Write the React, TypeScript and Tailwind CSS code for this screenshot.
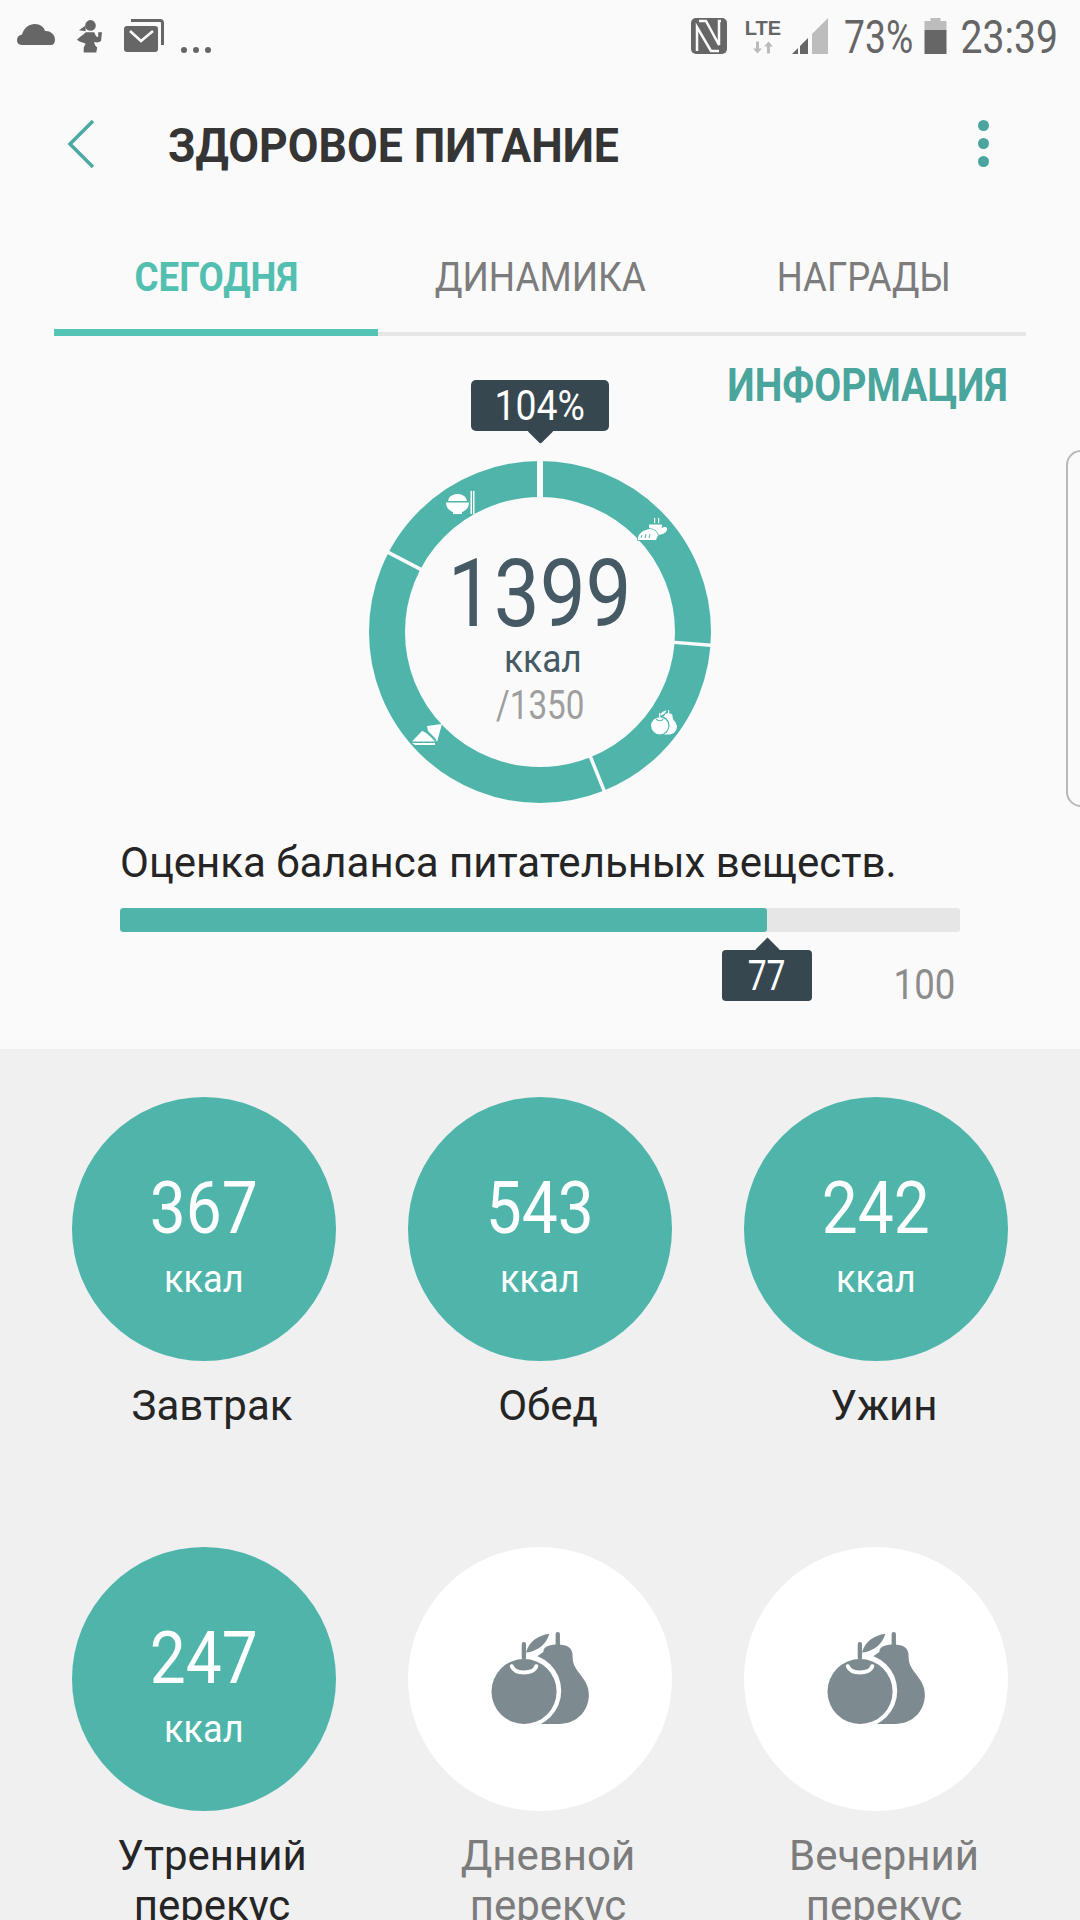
const TEAL = "#4fb5aa";

function polar(r: number, deg: number) {
  const a = ((deg - 90) * Math.PI) / 180;
  return [171 + r * Math.cos(a), 171 + r * Math.sin(a)];
}

function FruitShape({ color, gap }: { color: string; gap: string }) {
  return (
    <g>
      <rect x="194" y="0" width="13" height="44" rx="6" fill={color} />
      <path
        d="M157 60C157 45 175 38 200 38C230 38 245 50 245 70C245 100 255 110 270 130C285 150 294 165 294 190C294 240 255 277 205 277L100 277L100 100Z"
        fill={color}
      />
      <circle cx="99" cy="177" r="112" fill={gap} />
      <circle cx="99" cy="179" r="98" fill={color} />
      <rect x="92" y="30" width="13" height="54" rx="6" fill={color} />
      <path d="M105 62C112 30 140 10 175 5C168 35 140 58 105 62Z" fill={color} />
      <path d="M62 103C72 128 128 128 136 103" fill="none" stroke={gap} strokeWidth="12" strokeLinecap="round" />
    </g>
  );
}

function Meal({ value, label, muted }: { value?: string; label: string[]; muted?: boolean }) {
  return (
    <div className="flex w-[264px] flex-col items-center">
      <div
        className={`flex h-[264px] w-[264px] flex-col items-center rounded-full ${
          value ? "bg-[#4fb5aa] pt-[76px]" : "bg-white pt-[85px]"
        }`}
      >
        {value ? (
          <>
            <div className="scale-x-[0.89] text-[72px] leading-[72px] text-white">{value}</div>
            <div className="mt-[14px] scale-x-[0.95] text-[38px] leading-[40px] text-white">ккал</div>
          </>
        ) : (
          <svg viewBox="0 0 294 277" className="h-[92px] w-[98px]">
            <FruitShape color="#7d8a90" gap="#ffffff" />
          </svg>
        )}
      </div>
      <div
        className={`mt-[20px] pl-[16px] text-center text-[42px] leading-[50px] ${
          muted ? "text-[#7c7c7c]" : "text-[#252525]"
        }`}
      >
        {label.map((l) => (
          <div key={l}>{l}</div>
        ))}
      </div>
    </div>
  );
}

export default function App() {
  return (
    <div className="relative h-[1920px] w-[1080px] overflow-hidden bg-[#f0f0f0] [font-family:Roboto,sans-serif]">
      <div className="h-[1049px] bg-[#fafafa]">
        {/* status bar */}
        <div className="flex h-[72px] items-start justify-between pl-[17px] pr-[23px] text-[#666]">
          <div className="flex items-start">
            <svg viewBox="0 0 38 21" className="mt-[24px] h-[21px] w-[38px]" fill="#666">
              <path d="M5 21C1 21 0 18 0 16c0-3 2-5 5-5.500C7 4 12 0 18 0c5 0 9 3 10 7 5-.5 10 3 10 9 0 3-2 5-4 5Z" />
            </svg>
            <svg viewBox="0 0 28 34" className="ml-[21px] mt-[19px] h-[34px] w-[27px]" fill="#666">
              <circle cx="15" cy="6" r="5.500" />
              <path d="M10 6L3 11L10 12Z" />
              <path d="M10 13L19 13C20 16 21 18 23 18L23 13L27 13L26 22C24 24 21 24 19 23C19 26 20 27 22 29L21 34H8L8 29L10 25C7 24 3 23 1 21C3 18 8 16 10 13Z" />
            </svg>
            <svg viewBox="0 0 40 33" className="ml-[21px] mt-[19px] h-[33px] w-[40px]" fill="none">
              <path d="M7 1.500h29a2.500 2.500 0 0 1 2.500 2.500V26" stroke="#666" strokeWidth="3" />
              <rect x="0" y="7" width="34" height="26" rx="3" fill="#666" />
              <path d="M6 12l11 10 12-10" stroke="#fafafa" strokeWidth="2.500" />
            </svg>
            <div className="ml-[17px] mt-[47px] flex gap-[6px]">
              <span className="h-[6px] w-[6px] rounded-full bg-[#666]" />
              <span className="h-[6px] w-[6px] rounded-full bg-[#666]" />
              <span className="h-[6px] w-[6px] rounded-full bg-[#666]" />
            </div>
          </div>
          <div className="flex items-start">
            <svg viewBox="0 0 36 36" className="mt-[18px] h-[36px] w-[36px]">
              <rect width="36" height="36" rx="5" fill="#666" />
              <path d="M8 3h7l13 24V3h2M6 33V9l14 24h8" fill="none" stroke="#fafafa" strokeWidth="2.500" />
            </svg>
            <div className="ml-[17px] mt-[19px] flex w-[38px] flex-col items-center">
              <span className="text-[20px] font-bold leading-[19px] [font-family:'Liberation_Sans',sans-serif]">LTE</span>
              <svg viewBox="0 0 22 12" className="mt-[3px] h-[13px] w-[22px]" fill="#bbb">
                <path d="M4 0h3v7h3l-4.500 5L1 7h3zM15 12h3V5h3l-4.500-5L12 5h3z" />
              </svg>
            </div>
            <svg viewBox="0 0 36 36" className="ml-[10px] mt-[18px] h-[36px] w-[36px]">
              <path d="M20 36V16L36 0v36Z" fill="#bdbdbd" />
              <path d="M0 36l6-6v6ZM8 36v-8l8-8v16Z" fill="#666" />
            </svg>
            <div className="ml-[16px] mt-[14px] flex w-[69px] justify-center">
              <span className="scale-x-[0.81] text-[46px] leading-[46px]">73%</span>
            </div>
            <svg viewBox="0 0 22 36" className="ml-[11px] mt-[18px] h-[36px] w-[23px]">
              <path d="M6 0h10v3h6v9H0V3h6Z" fill="#bdbdbd" />
              <path d="M0 12h22v24H0Z" fill="#666" />
            </svg>
            <div className="ml-[15px] mt-[14px] flex w-[95px] justify-center">
              <span className="scale-x-[0.85] text-[46px] leading-[46px]">23:39</span>
            </div>
          </div>
        </div>

        {/* title */}
        <div className="relative flex h-[147px] items-center pl-[168px]">
          <svg viewBox="0 0 28 50" className="absolute left-[67px] top-[47px] h-[50px] w-[28px]" fill="none">
            <path d="M26 2L3 25l23 23" stroke="#4aaaa2" strokeWidth="3.500" />
          </svg>
          <span className="origin-left scale-x-[0.91] whitespace-nowrap text-[49px] font-bold leading-[56px] text-[#353535]">
            ЗДОРОВОЕ ПИТАНИЕ
          </span>
          <div className="absolute left-[978px] top-[48px] flex flex-col gap-[7px]">
            <span className="h-[11px] w-[11px] rounded-full bg-[#4aa5a0]" />
            <span className="h-[11px] w-[11px] rounded-full bg-[#4aa5a0]" />
            <span className="h-[11px] w-[11px] rounded-full bg-[#4aa5a0]" />
          </div>
        </div>

        {/* tabs */}
        <div className="ml-[54px] w-[972px]">
          <div className="flex h-[110px] items-center pt-[6px] text-[41px] leading-[48px]">
            <div className="flex w-[324px] justify-center font-bold text-[#53bfb1]">
              <span className="scale-x-[0.895]">СЕГОДНЯ</span>
            </div>
            <div className="flex w-[324px] justify-center text-[#7c7c7c]">
              <span className="scale-x-[0.9]">ДИНАМИКА</span>
            </div>
            <div className="flex w-[324px] justify-center text-[#7c7c7c]">
              <span className="scale-x-[0.89]">НАГРАДЫ</span>
            </div>
          </div>
          <div className="relative h-[7px]">
            <div className="absolute bottom-0 left-0 h-[4px] w-full bg-[#e6e6e6]" />
            <div className="absolute left-0 top-0 h-[7px] w-[324px] bg-[#53c4b6]" />
          </div>
        </div>

        {/* info */}
        <div className="mt-[24px] flex h-[50px] justify-end pr-[72px]">
          <span className="origin-right scale-x-[0.833] text-[47px] font-bold leading-[50px] text-[#4aa59c]">ИНФОРМАЦИЯ</span>
        </div>

        {/* ring */}
        <div className="mx-auto mt-[-30px] flex w-[342px] flex-col items-center">
          <div className="relative z-10 flex h-[51px] w-[138px] items-center justify-center rounded-[5px] bg-[#37474f] text-white">
            <span className="scale-x-[0.89] text-[42px] leading-[48px]">104%</span>
            <span className="absolute bottom-[-9px] left-[60px] h-[19px] w-[19px] rotate-45 rounded-[2px] bg-[#37474f]" />
          </div>
          <div className="relative mt-[30px] h-[342px] w-[342px]">
            <svg viewBox="0 0 342 342" className="absolute inset-0 h-full w-full">
              <circle cx="171" cy="171" r="153" fill="none" stroke={TEAL} strokeWidth="36" />
              {[0, 94.4, 158, 297.7].map((d) => {
                const [x1, y1] = polar(132, d);
                const [x2, y2] = polar(173, d);
                return <line key={d} x1={x1} y1={y1} x2={x2} y2={y2} stroke="#fafafa" strokeWidth={d === 0 ? 6 : 3.5} />;
              })}
              <g fill="#fff">
                {/* bowl and sticks */}
                <path d="M77 41.500H100C100 47 96 50 93 51V53H84V51C81 50 77 47 77 41.500Z" />
                <path d="M79 40C80 35 84 33 88.500 33C93 33 97 35 98 40Z" />
                <rect x="101.500" y="30" width="1.500" height="23" />
                <rect x="104" y="30" width="1.500" height="23" />
                {/* cup */}
                <path d="M280 63.500H293C293 65 293 66 292.500 67C296 65 299 66 298 69C297 72 294 73 290 74C288 77 286 77 284 77C282 74 281 69 280 66Z" />
                <rect x="285" y="57" width="1.200" height="5" />
                <rect x="289" y="57" width="1.200" height="5" />
                {/* bread */}
                <path d="M269 79C268 73 274 69 281 68C285 68 288 71 289 74L287 79Z" stroke={TEAL} strokeWidth="1.500" paintOrder="stroke" />
                <path d="M273 74l-1 3M277 73l-1 4M281 73l-1 4" stroke={TEAL} strokeWidth="1" />
                {/* sandwich */}
                <path d="M43 280.500L53 270C57 271 62 276 66 280.500Z" />
                <path d="M43 282H66V284H46Z" />
                <path d="M58 265L73 263L68 281L66 277L59 270Z" />
              </g>
              <g transform="translate(282 249) scale(0.088)">
                <FruitShape color="#ffffff" gap={TEAL} />
              </g>
            </svg>
            <div className="absolute inset-0 flex flex-col items-center">
              <div className="mt-[88px] scale-x-[0.87] text-[94px] leading-[90px] text-[#455a64]">1399</div>
              <div className="pl-[6px] text-[38px] leading-[40px] text-[#455a64]">
                <div className="scale-x-[0.93]">ккал</div>
              </div>
              <div className="mt-[7px] scale-x-[0.83] text-[40px] leading-[40px] text-[#9e9e9e]">/1350</div>
            </div>
          </div>
        </div>

        {/* balance */}
        <div className="ml-[120px] mt-[35px] w-[840px]">
          <div className="whitespace-nowrap text-[42px] leading-[50px] text-[#252525]">Оценка баланса питательных веществ.</div>
          <div className="mt-[20px] h-[24px] overflow-hidden rounded-[3px] bg-[#e6e6e6]">
            <div className="h-full w-[647px] rounded-[3px] bg-[#4fb5aa]" />
          </div>
          <div className="relative mt-[18px] h-[51px]">
            <div className="absolute left-[602px] top-0 flex h-[51px] w-[90px] items-center justify-center rounded-[4px] bg-[#37474f] text-white">
              <span className="absolute left-[37px] top-[-9px] h-[17px] w-[17px] rotate-45 bg-[#37474f]" />
              <span className="relative scale-x-[0.8] text-[42px] leading-[48px]">77</span>
            </div>
            <div className="absolute left-[774px] top-[13px] flex w-[60px] justify-center">
              <span className="scale-x-[0.87] text-[42px] leading-[44px] text-[#8c8c8c]">100</span>
            </div>
          </div>
        </div>
      </div>

      {/* meals */}
      <div className="flex justify-between px-[72px] pt-[48px]">
        <Meal value="367" label={["Завтрак"]} />
        <Meal value="543" label={["Обед"]} />
        <Meal value="242" label={["Ужин"]} />
      </div>
      <div className="flex justify-between px-[72px] pt-[116px]">
        <Meal value="247" label={["Утренний", "перекус"]} />
        <Meal label={["Дневной", "перекус"]} muted />
        <Meal label={["Вечерний", "перекус"]} muted />
      </div>

      {/* edge handle */}
      <div className="absolute left-[1066px] top-[450px] h-[357px] w-[30px] rounded-[16px] border-2 border-[#b8b8b8] bg-[#fafafa]" />
    </div>
  );
}
